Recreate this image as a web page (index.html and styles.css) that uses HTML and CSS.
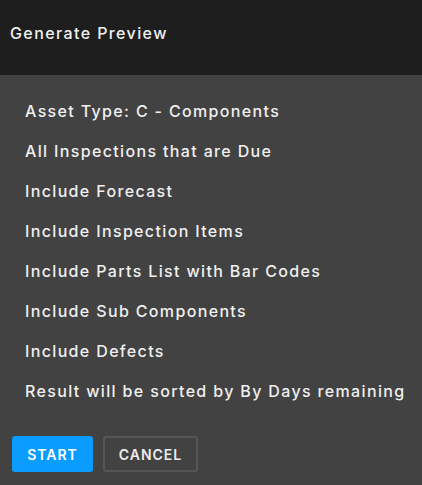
FILE: index.html
```html
<!DOCTYPE html>
<html>
<head>
<meta charset="utf-8">
<link rel="stylesheet" href="styles.css">
</head>
<body>
<div class="dialog">
  <header class="head"><h1 class="title">Generate Preview</h1></header>
  <main class="content">
    <ul class="list">
      <li>Asset Type: C - Components</li>
      <li>All Inspections that are Due</li>
      <li>Include Forecast</li>
      <li>Include Inspection Items</li>
      <li>Include Parts List with Bar Codes</li>
      <li>Include Sub Components</li>
      <li>Include Defects</li>
      <li>Result will be sorted by By Days remaining</li>
    </ul>
    <div class="actions">
      <button class="btn btn-primary">START</button>
      <button class="btn btn-outline">CANCEL</button>
    </div>
  </main>
</div>
</body>
</html>
```

FILE: styles.css
```css
html, body {
  margin: 0;
  padding: 0;
  background: #424242;
}
.dialog {
  width: 422px;
  height: 485px;
  display: flex;
  flex-direction: column;
  font-family: Inter, "Liberation Sans", sans-serif;
  color: #f0f0f0;
}
.head {
  background: #1e1e1e;
  height: 75px;
  box-sizing: border-box;
  padding: 24px 10px 0;
}
.title {
  margin: 0;
  font-size: 16px;
  font-weight: 500;
  letter-spacing: 1.4px;
  line-height: 19px;
}
.content {
  flex: 1;
  background: #424242;
  padding: 16px 0 0;
}
.list {
  list-style: none;
  margin: 0;
  padding: 0 0 0 25px;
}
.list li {
  font-size: 16px;
  font-weight: 500;
  letter-spacing: 1.35px;
  line-height: 40px;
  height: 40px;
}
.actions {
  display: flex;
  gap: 10px;
  padding: 25px 12px 0;
}
.btn {
  height: 36px;
  box-sizing: border-box;
  font-family: Inter, "Liberation Sans", sans-serif;
  font-size: 14px;
  font-weight: 600;
  letter-spacing: 1px;
  color: #fff;
  border-radius: 3px;
  cursor: pointer;
  padding: 0;
}
.btn-primary {
  width: 81px;
  background: #0a9dff;
  border: none;
}
.btn-outline {
  width: 95px;
  background: transparent;
  border: 2px solid #555555;
  color: #ececec;
}
```
